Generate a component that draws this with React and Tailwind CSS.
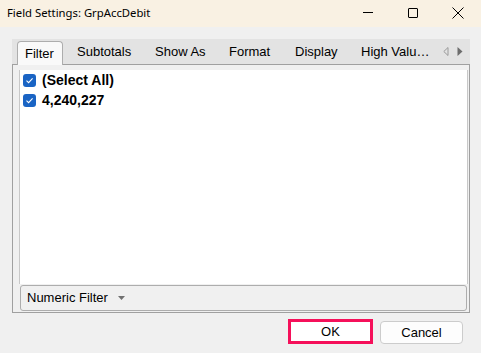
import React from "react";

const Check = () => (
  <span className="w-[13px] h-[13px] rounded-[3px] bg-[#1a64c4] flex items-center justify-center shrink-0">
    <svg width="9" height="9" viewBox="0 0 9 9">
      <path d="M1.5 4.6 L3.6 6.6 L7.6 2.4" fill="none" stroke="white" strokeWidth="1.1" />
    </svg>
  </span>
);

const Tab = ({ label, w }) => (
  <div className={`h-full flex items-center pl-[14px] whitespace-nowrap shrink-0 ${w}`}>{label}</div>
);

const App = () => {
  return (
    <div
      className="w-[481px] h-[353px] bg-[#f0f0f0] flex flex-col text-black overflow-hidden"
      style={{ fontFamily: '"Liberation Sans", Arial, sans-serif' }}
    >
      {/* title bar */}
      <div className="h-[27px] bg-[#f9f1e3] flex items-center relative shrink-0">
        <span className="ml-[7px] text-[11.3px] font-['Noto_Sans',sans-serif]">Field Settings: GrpAccDebit</span>
        <div className="ml-auto flex items-center h-full">
          <div className="w-[45px] flex justify-center">
            <div className="w-[10px] h-px bg-black mt-[-2px]" />
          </div>
          <div className="w-[45px] flex justify-center">
            <div className="w-[10px] h-[10px] border border-black rounded-[1px] mt-[-2px]" />
          </div>
          <div className="w-[45px] flex justify-center mr-[1px]">
            <svg width="12" height="12" viewBox="0 0 12 12" className="mt-[-2px]">
              <path d="M0.5 0.5 L11.5 11.5 M11.5 0.5 L0.5 11.5" stroke="black" strokeWidth="1" />
            </svg>
          </div>
        </div>
      </div>

      <div className="px-[12px] pt-[12px]">
        {/* tab strip */}
        <div className="h-[25px] w-[458px] bg-[#e3e3e3] flex text-[13px] relative">
          <div className="relative z-10 ml-[5px] mt-[2px] w-[46px] h-[24px] bg-[#f9f9f9] border border-b-0 border-[#adadad] rounded-t-[4px] flex items-center pl-[7px] shrink-0">
            Filter
          </div>
          <Tab label="Subtotals" w="w-[78px]" />
          <Tab label="Show As" w="w-[74px]" />
          <Tab label="Format" w="w-[66px]" />
          <Tab label="Display" w="w-[66px]" />
          <Tab label="High Valu…" w="w-[80px]" />
          <div className="absolute right-[7px] top-[8px] flex items-center gap-[8px]">
            <svg width="6" height="9" viewBox="0 0 6 9">
              <path d="M5 0.5 L0.8 4.5 L5 8.5 Z" fill="none" stroke="#9a9a9a" strokeWidth="1" />
            </svg>
            <svg width="6" height="9" viewBox="0 0 6 9">
              <path d="M0.5 0 L5.5 4.5 L0.5 9 Z" fill="#6d6d6d" />
            </svg>
          </div>
        </div>

        {/* panel */}
        <div className="w-[458px] h-[249px] border border-[#a0a0a0] bg-[#f0f0f0] pl-[6px] pt-[5px] flex flex-col">
          <div className="w-[449px] h-[214px] bg-white border-l border-r border-[#c8c8c8]">
            <div className="h-[20px] flex items-center pl-[3px] gap-[6px] text-[14px] font-bold">
              <Check />
              <span>(Select All)</span>
            </div>
            <div className="h-[20px] flex items-center pl-[3px] gap-[6px] text-[14px] font-bold">
              <Check />
              <span>4,240,227</span>
            </div>
          </div>
          <div className="ml-[1px] mt-px w-[447px] h-[26px] border border-[#adadad] rounded-[3px] bg-[#f0f0f0] flex items-center pl-[6px] text-[13px]">
            <span>Numeric Filter</span>
            <svg width="7" height="4" viewBox="0 0 7 4" className="ml-[10px]">
              <path d="M0 0 L7 0 L3.5 4 Z" fill="#707070" />
            </svg>
          </div>
        </div>

        {/* buttons */}
        <div className="flex justify-end items-start pr-[6px] mt-[6px] gap-[7px] text-[13px]">
          <div className="w-[85px] h-[25px] border-[3px] border-[#f5105a] bg-white flex items-center justify-center">
            OK
          </div>
          <div className="w-[83px] h-[23px] mt-[2px] border border-[#cccccc] rounded-[4px] bg-[#fdfdfd] flex items-center justify-center">
            Cancel
          </div>
        </div>
      </div>
    </div>
  );
};

export default App;
